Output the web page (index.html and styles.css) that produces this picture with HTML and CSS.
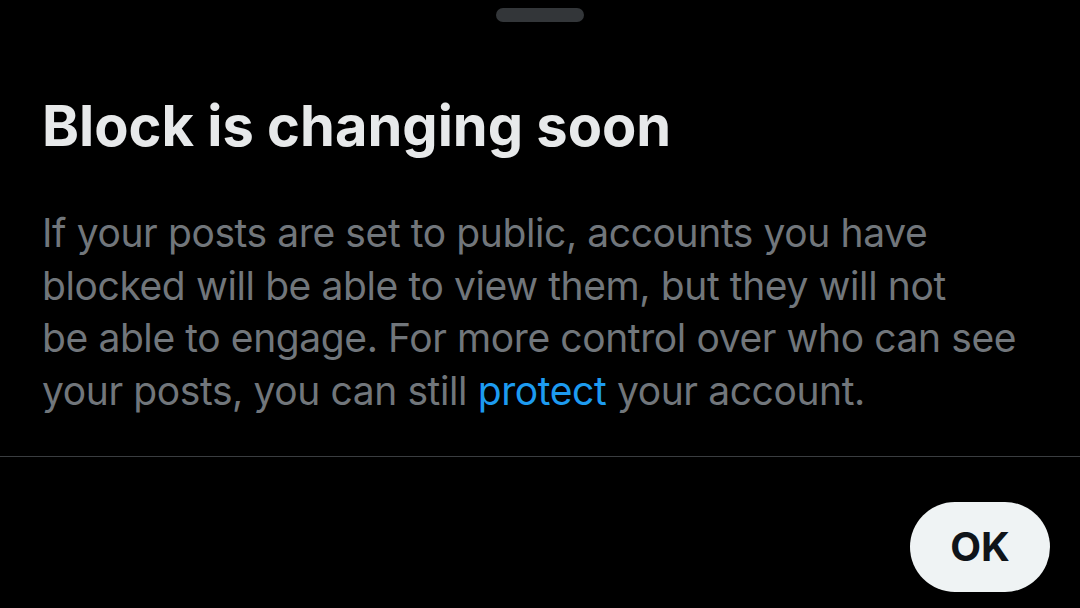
FILE: index.html
```html
<!DOCTYPE html>
<html lang="en">
<head>
<meta charset="utf-8">
<title>Block is changing soon</title>
<link rel="stylesheet" href="styles.css">
</head>
<body>
<div class="sheet">
  <div class="grabber-row"><div class="grabber"></div></div>
  <div class="content">
    <h1 class="title">Block is changing soon</h1>
    <p class="body-text">If your posts are set to public, accounts you have<br>blocked will be able to view them, but they will not<br>be able to engage. For more control over who can see<br>your posts, you can still <a class="link" href="#">protect</a> your account.</p>
  </div>
  <div class="divider"></div>
  <div class="footer">
    <button class="ok-btn">OK</button>
  </div>
</div>
</body>
</html>
```

FILE: styles.css
```css
html, body {
  margin: 0;
  padding: 0;
  background: #000;
}
body {
  width: 1080px;
  height: 608px;
  overflow: hidden;
  font-family: Inter, "Noto Sans", sans-serif;
}
.sheet {
  display: flex;
  flex-direction: column;
}
.grabber-row {
  display: flex;
  justify-content: center;
  padding-top: 8px;
}
.grabber {
  width: 88px;
  height: 14px;
  border-radius: 7px;
  background: #333639;
}
.content {
  padding: 0 30px 0 42px;
}
.title {
  margin: 71px 0 0 0;
  font-size: 56px;
  line-height: 67px;
  font-weight: 700;
  color: #e7e9ea;
}
.body-text {
  margin: 47px 0 0 0;
  font-size: 39px;
  line-height: 52.7px;
  letter-spacing: -0.4px;
  font-weight: 400;
  color: #71767b;
  white-space: nowrap;
}
.link {
  color: #1d9bf0;
  text-decoration: none;
}
.divider {
  margin-top: 38px;
  height: 1px;
  background: #3a3d40;
}
.footer {
  display: flex;
  justify-content: flex-end;
  padding: 45px 30px 0 0;
}
.ok-btn {
  width: 140px;
  height: 90px;
  border: none;
  border-radius: 45px;
  background: #eff3f4;
  color: #0f1419;
  font-family: Inter, "Noto Sans", sans-serif;
  font-size: 40px;
  font-weight: 700;
  padding: 0;
}
```
